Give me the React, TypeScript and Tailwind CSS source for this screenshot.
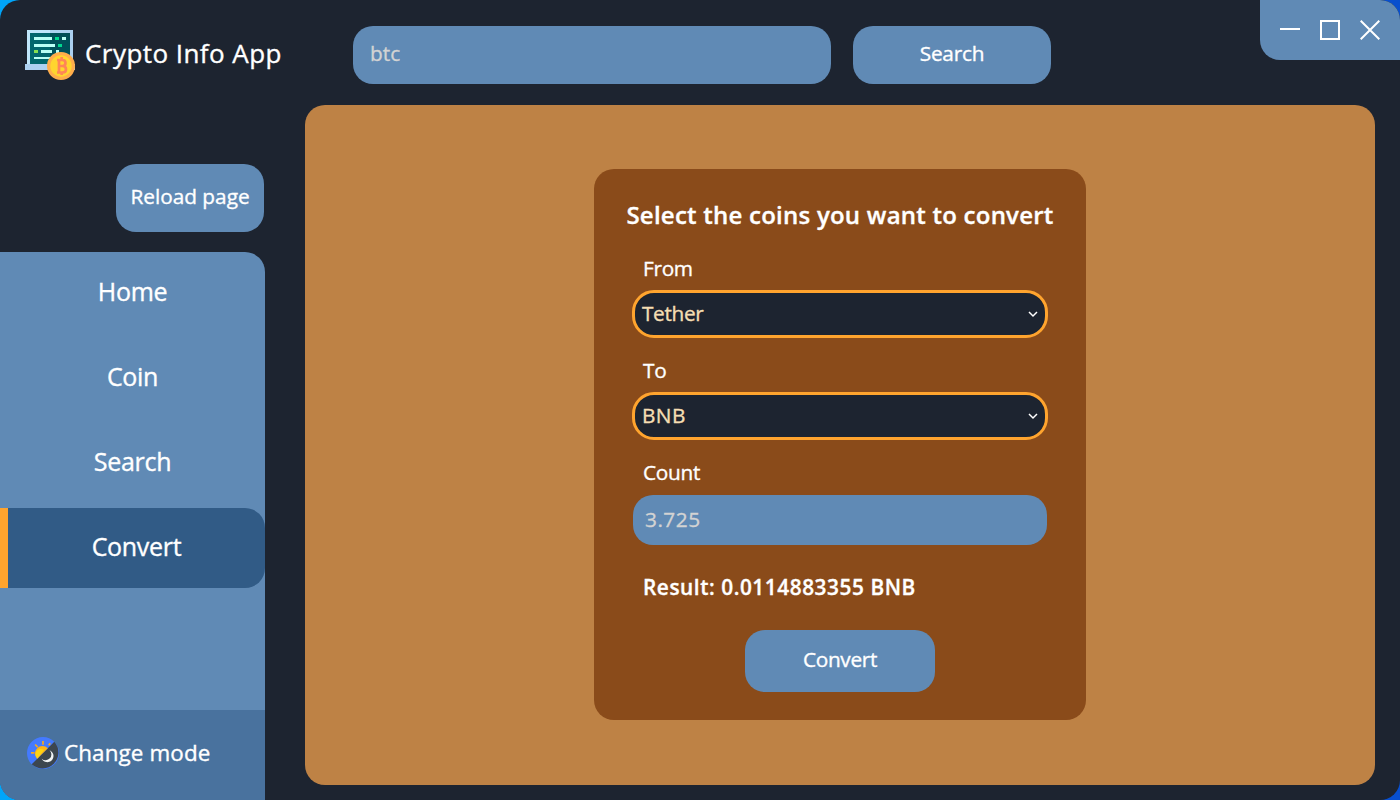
import React from 'react';

function LogoIcon() {
  return (
    <svg width="50" height="50" viewBox="0 0 50 50" className="block shrink-0" shapeRendering="auto">
      <path d="M2 0h46v34H2z" fill="#c0e7fb" />
      <path d="M25 0h23v34H25z" fill="#abd0f0" />
      <path d="M5 3h40v31H5z" fill="#02676d" />
      <path d="M25 3h20v31H25z" fill="#004f58" />
      <path d="M0 34h50v6H0z" fill="#add1f1" />
      <g fill="#b9fff5">
        <path d="M9 7h18v3H9zM37 7h4v3h-4zM9 14h21v3H9zM16 20h11v3H16zM31 20h3v3h-3zM9 27h18v2H9z" />
      </g>
      <path d="M30 7h4v3h-4zM33 14h4v3h-4z" fill="#00d890" />
      <path d="M9 20h4v3H9z" fill="#86df52" />
      <circle cx="36" cy="36" r="14" fill="#ffad4b" />
      <circle cx="36" cy="36" r="10.7" fill="#ffd52f" />
      <g fill="none" stroke="#ff8657" strokeWidth="2.7">
        <path d="M34 30v12.5M32 30h5.5q3 0 3 3t-3 3h-3.5M37.5 36q3.5 0 3.5 3.2t-3.5 3.3H32M36.7 27v3M36.7 42v3" />
      </g>
    </svg>
  );
}

function ModeIcon() {
  return (
    <svg width="32" height="32" viewBox="0 0 32 32" className="block shrink-0">
      <circle cx="16" cy="16" r="16" fill="#447aff" />
      <path d="M27.3 4.7A16 16 0 0 1 4.7 27.3z" fill="#3c464f" />
      <path d="M10.2 21.8A7 7 0 1 1 20.8 11.2z" fill="#ffb414" />
      <path d="M10.5 21.5A5 5 0 0 1 17 13z" fill="#ffd414" />
      <path d="M16 4v3.8M8.2 7.5l2.5 2.8M4 15.8h3.5M23.2 6.2l-1.5 2" stroke="#f6a820" strokeWidth="1.7" />
      <path d="M22.5 13.2a6.2 6.2 0 1 1-7.8 8.5 5 5 0 0 0 7.8-8.5z" fill="#f1f4f6" />
    </svg>
  );
}

function NavItem({ label }: { label: string }) {
  return (
    <div className="flex h-20 items-center justify-center pb-0.5 text-[25px] tracking-[-0.3px]">{label}</div>
  );
}

function SelectBox({ value }: { value: string }) {
  return (
    <div className="mx-[38px] flex h-12 items-center justify-between rounded-[22px] border-[3px] border-[#ffa42e] bg-[#1d2430] pl-[7px] pr-[7px] text-[20.8px] text-[#f5deb3]">
      <span className={value === 'BNB' ? 'tracking-[0.4px]' : 'tracking-[-0.35px]'}>{value}</span>
      <svg width="10" height="10" viewBox="0 0 10 10" fill="none" stroke="white" strokeWidth="1.5">
        <path d="M1 3l4 4 4-4" />
      </svg>
    </div>
  );
}

export default function App() {
  return (
    <div className="h-[800px] w-[1400px] overflow-hidden bg-linear-to-r from-[#00a5fa] from-50% to-[#084fce] to-50% font-['Open_Sans',sans-serif] text-white [-webkit-text-stroke-width:0.35px]">
      <div className="flex h-full flex-col overflow-hidden rounded-[20px] bg-[#1d2430]">
        <header className="flex h-[105px] shrink-0 items-start">
          <div className="flex w-[353px] items-start pl-[25px] pt-[30px]">
            <LogoIcon />
            <h1 className="ml-2.5 whitespace-nowrap text-[26px] leading-[46px] tracking-[0.45px]">Crypto Info App</h1>
          </div>
          <div className="mt-[26px] flex h-[58px] w-[478px] items-center rounded-[20px] bg-[#608ab5] pb-0.5 pl-[17px] text-[20.8px] text-[#d3d3d3]">btc</div>
          <div className="ml-[22px] mt-[26px] flex h-[58px] w-[198px] items-center justify-center rounded-[20px] bg-[#608ab5] pb-0.5 text-[20.8px] tracking-[-0.2px]">Search</div>
          <div className="ml-auto flex h-[60px] w-[140px] items-center gap-5 rounded-bl-[20px] bg-[#608ab5] pl-5">
            <svg width="20" height="20" viewBox="0 0 20 20"><path d="M0 9h20" stroke="white" strokeWidth="2" /></svg>
            <svg width="20" height="20" viewBox="0 0 20 20"><path d="M1 1h18v18H1z" stroke="white" strokeWidth="2" fill="none" /></svg>
            <svg width="20" height="20" viewBox="0 0 20 20"><path d="M.7.7l18.6 18.6M19.3.7L.7 19.3" stroke="white" strokeWidth="2" /></svg>
          </div>
        </header>
        <div className="flex min-h-0 flex-1">
          <aside className="flex w-[265px] shrink-0 flex-col">
            <div className="ml-[116px] mt-[59px] flex h-[68px] w-[148px] items-center justify-center whitespace-nowrap rounded-[20px] bg-[#608ab5] pb-0.5 text-[20.8px]">Reload page</div>
            <div className="mt-5 flex flex-1 flex-col overflow-hidden rounded-tr-[20px] bg-[#608ab5]">
              <nav className="flex flex-1 flex-col gap-[5px] pt-px">
                <NavItem label="Home" />
                <NavItem label="Coin" />
                <NavItem label="Search" />
                <div className="flex h-20 items-center justify-center rounded-r-[20px] border-l-8 border-[#ffa42e] bg-[#315b86] pb-0.5 text-[25px] tracking-[-0.3px]">Convert</div>
              </nav>
              <div className="flex h-[90px] items-center bg-[#49729e] pb-[5px] pl-[27px]">
                <ModeIcon />
                <span className="ml-[5px] text-[22.4px] tracking-[0.13px]">Change mode</span>
              </div>
            </div>
          </aside>
          <main className="mb-[15px] ml-10 flex w-[1070px] justify-center rounded-[20px] bg-[#be8245] pt-16">
            <section className="flex h-[551px] w-[492px] flex-col rounded-[20px] bg-[#8a4b1a]">
              <h2 className="mt-7 whitespace-nowrap text-center text-[24px] leading-9 font-semibold tracking-[0.24px]">Select the coins you want to convert</h2>
              <label className="ml-[49px] mt-[21px] text-[20.8px] leading-7 tracking-[-0.3px]">From</label>
              <div className="mt-2"><SelectBox value="Tether" /></div>
              <label className="ml-[49px] mt-[18px] text-[20.8px] leading-7 tracking-[-0.3px]">To</label>
              <div className="mt-2"><SelectBox value="BNB" /></div>
              <label className="ml-[49px] mt-[18px] text-[20.8px] leading-7 tracking-[-0.3px]">Count</label>
              <div className="mx-[39px] mt-[9px] flex h-[50px] items-center rounded-[20px] bg-[#608ab5] pl-3 text-[20.8px] tracking-[0.5px] text-[#d3d3d3]">3.725</div>
              <p className="ml-[49px] mt-7 whitespace-nowrap text-[20.8px] leading-7 font-semibold tracking-[0.56px]">Result: 0.0114883355 BNB</p>
              <div className="mt-[29px] flex h-[62px] w-[190px] items-center justify-center self-center rounded-[20px] bg-[#608ab5] pb-0.5 text-[20.8px] tracking-[-0.3px]">Convert</div>
            </section>
          </main>
        </div>
      </div>
    </div>
  );
}
